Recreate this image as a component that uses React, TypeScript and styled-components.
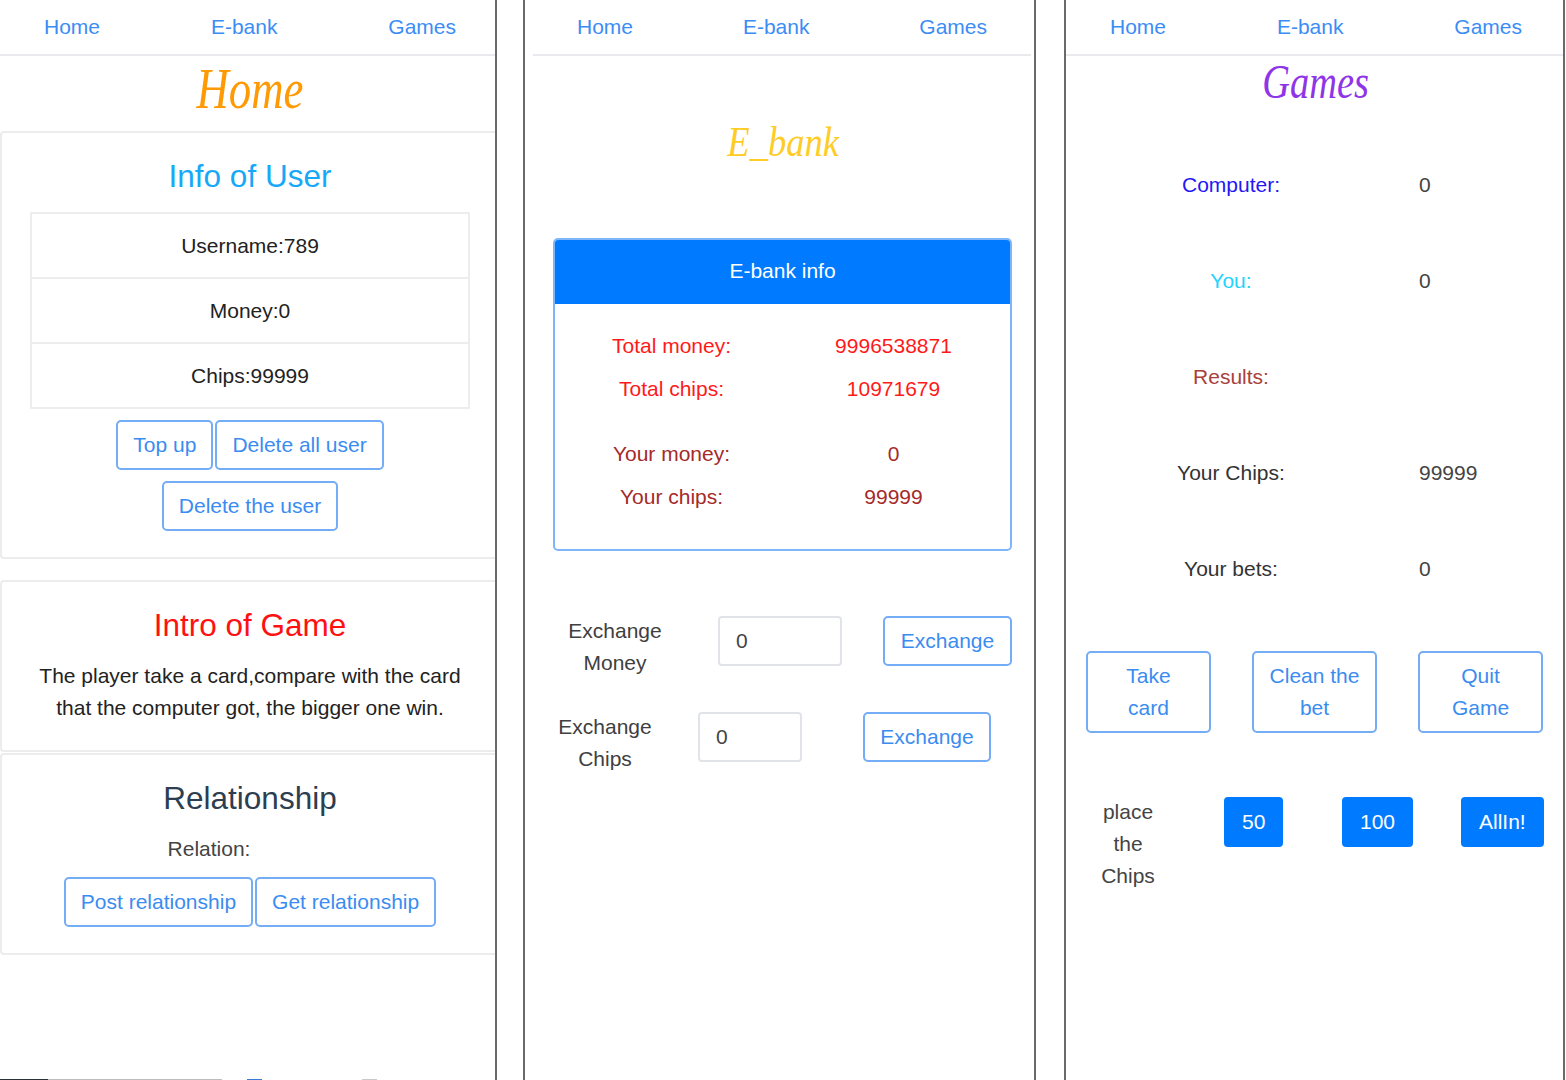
import styled, { createGlobalStyle } from 'styled-components';

const FRAME = '#6a6a6a';
const LINK = '#3b8df5';
const SANS = "'Liberation Sans', Arial, sans-serif";
const SERIF = "'Liberation Serif', 'Times New Roman', serif";

const GlobalStyle = createGlobalStyle`
  html, body {
    margin: 0;
    padding: 0;
    background: #fff;
  }
  body {
    font-family: ${SANS};
    font-size: 21px;
    color: #222;
  }
  *, *::before, *::after {
    box-sizing: border-box;
  }
`;

const Page = styled.main`
  display: flex;
  align-items: flex-start;
  width: 1566px;
  height: 1080px;
  overflow: hidden;
  background: #fff;
`;

const Phone = styled.section<{ $width: number; $gap?: number; $leftEdge?: boolean }>`
  flex: none;
  display: flex;
  flex-direction: column;
  width: ${(p) => p.$width}px;
  height: 1080px;
  margin-left: ${(p) => p.$gap ?? 0}px;
  border-left: ${(p) => (p.$leftEdge ? `2px solid ${FRAME}` : 'none')};
  border-right: 2px solid ${FRAME};
  overflow: hidden;
`;

const Screen = styled.div<{ $width: number }>`
  flex: none;
  display: flex;
  flex-direction: column;
  width: ${(p) => p.$width}px;
`;

const Nav = styled.nav<{ $inset?: string }>`
  display: flex;
  justify-content: space-between;
  align-items: center;
  height: 56px;
  margin: ${(p) => p.$inset ?? '0'};
  padding: 0 44px;
  border-bottom: 2px solid #e8eaed;
`;

const NavLink = styled.a`
  color: ${LINK};
  font-size: 21px;
  text-decoration: none;
`;

const PageTitle = styled.h1<{
  $color: string;
  $size: number;
  $squeeze: number;
  $line: number;
  $mt: number;
  $mb: number;
}>`
  margin: ${(p) => p.$mt}px 0 ${(p) => p.$mb}px;
  text-align: center;
  font: italic 400 ${(p) => p.$size}px ${SERIF};
  line-height: ${(p) => p.$line}px;
  color: ${(p) => p.$color};

  & > span {
    display: inline-block;
    transform: scaleX(${(p) => p.$squeeze});
  }
`;

/* ---------- Home ---------- */

const Card = styled.div<{ $mt?: number }>`
  display: flex;
  flex-direction: column;
  align-items: center;
  margin-top: ${(p) => p.$mt ?? 0}px;
  padding: 23px 28px 26px;
  border: 2px solid #ececec;
  border-radius: 4px;
  text-align: center;
`;

const CardTitle = styled.h2<{ $color: string }>`
  margin: 0;
  font-size: 31.5px;
  font-weight: 400;
  line-height: 40px;
  color: ${(p) => p.$color};
`;

const InfoTable = styled.div`
  width: 100%;
  margin-top: 16px;
  border: 2px solid #ededed;
`;

const InfoRow = styled.div`
  display: flex;
  align-items: center;
  justify-content: center;
  height: 63px;
  color: #222;

  & + & {
    height: 65px;
    border-top: 2px solid #ededed;
  }
`;

const Paragraph = styled.p`
  margin: 15px 0 0;
  line-height: 32px;
  color: #222;
`;

const RelationText = styled.div`
  margin-top: 15px;
  padding-right: 82px;
  line-height: 32px;
  color: #444;
`;

const ButtonRow = styled.div<{ $mt: number }>`
  display: flex;
  justify-content: center;
  gap: 2px;
  margin-top: ${(p) => p.$mt}px;
`;

const OutlineButton = styled.button<{ $width?: number; $height?: number; $ml?: number }>`
  flex: none;
  width: ${(p) => (p.$width ? `${p.$width}px` : 'auto')};
  height: ${(p) => p.$height ?? 50}px;
  margin-left: ${(p) => p.$ml ?? 0}px;
  padding: ${(p) => (p.$width ? '0' : '0 15px')};
  border: 2px solid #74acf5;
  border-radius: 5px;
  background: #fff;
  color: #3b8cf0;
  font-family: ${SANS};
  font-size: 21px;
  line-height: 32px;
  white-space: nowrap;
  cursor: pointer;
`;

const Taskbar = styled.div`
  display: flex;
  height: 1px;
  margin-top: auto;
`;

const TaskbarPiece = styled.span<{ $width: number; $color: string; $ml?: number }>`
  width: ${(p) => p.$width}px;
  margin-left: ${(p) => p.$ml ?? 0}px;
  background: ${(p) => p.$color};
`;

/* ---------- E-bank ---------- */

const BankCard = styled.div`
  margin: 0 29px 0 28px;
  border: 2px solid #7fb6fa;
  border-radius: 5px;
  overflow: hidden;
`;

const BankHeader = styled.div`
  display: flex;
  align-items: center;
  justify-content: center;
  height: 64px;
  padding-bottom: 3px;
  background: #007bff;
  color: #fff;
`;

const BankBody = styled.div`
  padding: 20px 0 31px;
`;

const BankGrid = styled.div<{ $color: string; $mt?: number }>`
  display: grid;
  grid-template-columns: 222px 222px;
  grid-auto-rows: 43px;
  justify-content: center;
  align-items: center;
  margin-top: ${(p) => p.$mt ?? 0}px;
  text-align: center;
  color: ${(p) => p.$color};
`;

const ExchangeRow = styled.div<{ $mt: number; $pl: number }>`
  display: flex;
  align-items: flex-start;
  margin-top: ${(p) => p.$mt}px;
  padding-left: ${(p) => p.$pl}px;
`;

const ExchangeLabel = styled.div`
  flex: none;
  width: 110px;
  line-height: 32px;
  text-align: center;
  color: #404040;
`;

const AmountInput = styled.input<{ $width: number; $ml: number }>`
  flex: none;
  width: ${(p) => p.$width}px;
  height: 50px;
  margin: 1px 0 0 ${(p) => p.$ml}px;
  padding: 0 16px;
  border: 2px solid #e0e3e8;
  border-radius: 4px;
  background: #fff;
  color: #444;
  font-family: ${SANS};
  font-size: 21px;
  outline: none;
`;

const ExchangeButton = styled(OutlineButton)`
  margin-top: 1px;
`;

/* ---------- Games ---------- */

const StatRow = styled.div`
  display: grid;
  grid-template-columns: 330px 1fr;
  align-items: center;
  height: 96px;
`;

const StatLabel = styled.span<{ $color: string }>`
  text-align: center;
  color: ${(p) => p.$color};
`;

const StatValue = styled.span`
  padding-left: 23px;
  color: #444;
`;

const ActionRow = styled.div`
  display: grid;
  grid-template-columns: repeat(3, 125px);
  column-gap: 41px;
  margin-top: 34px;
  padding-left: 20px;
`;

const ChipRow = styled.div`
  display: grid;
  grid-template-columns: 138px 118px 119px auto;
  align-items: start;
  justify-items: start;
  margin-top: 64px;
  padding-left: 20px;
`;

const ChipLabel = styled.div`
  width: 84px;
  margin-top: -1px;
  line-height: 32px;
  text-align: center;
  color: #444;
`;

const SolidButton = styled.button`
  height: 50px;
  padding: 0 18px;
  border: none;
  border-radius: 4px;
  background: #007bff;
  color: #fff;
  font-family: ${SANS};
  font-size: 21px;
  cursor: pointer;
`;

const navItems = ['Home', 'E-bank', 'Games'];

function TopNav({ inset }: { inset?: string }) {
  return (
    <Nav $inset={inset}>
      {navItems.map((item) => (
        <NavLink key={item} href="#">
          {item}
        </NavLink>
      ))}
    </Nav>
  );
}

const stats = [
  { label: 'Computer:', color: '#2417f5', value: '0' },
  { label: 'You:', color: '#22d2ff', value: '0' },
  { label: 'Results:', color: '#a8413a', value: '' },
  { label: 'Your Chips:', color: '#333', value: '99999' },
  { label: 'Your bets:', color: '#333', value: '0' },
];

export default function App() {
  return (
    <>
      <GlobalStyle />
      <Page>
        <Phone $width={497}>
          <Screen $width={500}>
            <TopNav />
            <PageTitle $color="#ff9a05" $size={56} $squeeze={0.8} $line={60} $mt={3} $mb={12}>
              <span>Home</span>
            </PageTitle>

            <Card>
              <CardTitle $color="#17a9f7">Info of User</CardTitle>
              <InfoTable>
                <InfoRow>Username:789</InfoRow>
                <InfoRow>Money:0</InfoRow>
                <InfoRow>Chips:99999</InfoRow>
              </InfoTable>
              <ButtonRow $mt={11}>
                <OutlineButton>Top up</OutlineButton>
                <OutlineButton>Delete all user</OutlineButton>
              </ButtonRow>
              <ButtonRow $mt={11}>
                <OutlineButton>Delete the user</OutlineButton>
              </ButtonRow>
            </Card>

            <Card $mt={21}>
              <CardTitle $color="#ff1111">Intro of Game</CardTitle>
              <Paragraph>
                The player take a card,compare with the card
                <br />
                that the computer got, the bigger one win.
              </Paragraph>
            </Card>

            <Card $mt={1}>
              <CardTitle $color="#2c3e50">Relationship</CardTitle>
              <RelationText>Relation:</RelationText>
              <ButtonRow $mt={12}>
                <OutlineButton>Post relationship</OutlineButton>
                <OutlineButton>Get relationship</OutlineButton>
              </ButtonRow>
            </Card>
          </Screen>
          <Taskbar>
            <TaskbarPiece $width={48} $color="#263238" />
            <TaskbarPiece $width={174} $color="#bdbdbd" />
            <TaskbarPiece $width={15} $ml={25} $color="#3a7bd5" />
            <TaskbarPiece $width={15} $ml={100} $color="#c8c8c8" />
          </Taskbar>
        </Phone>

        <Phone $width={513} $gap={26} $leftEdge>
          <Screen $width={516}>
            <TopNav inset="0 10px 0 8px" />
            <PageTitle $color="#ffcc26" $size={42} $squeeze={0.87} $line={60} $mt={56} $mb={66}>
              <span>E_bank</span>
            </PageTitle>

            <BankCard>
              <BankHeader>E-bank info</BankHeader>
              <BankBody>
                <BankGrid $color="#ff1a1a">
                  <span>Total money:</span>
                  <span>9996538871</span>
                  <span>Total chips:</span>
                  <span>10971679</span>
                </BankGrid>
                <BankGrid $color="#a52a2a" $mt={22}>
                  <span>Your money:</span>
                  <span>0</span>
                  <span>Your chips:</span>
                  <span>99999</span>
                </BankGrid>
              </BankBody>
            </BankCard>

            <ExchangeRow $mt={64} $pl={35}>
              <ExchangeLabel>
                Exchange
                <br />
                Money
              </ExchangeLabel>
              <AmountInput $width={124} $ml={48} value="0" readOnly />
              <ExchangeButton $width={129} $ml={41}>
                Exchange
              </ExchangeButton>
            </ExchangeRow>

            <ExchangeRow $mt={32} $pl={25}>
              <ExchangeLabel>
                Exchange
                <br />
                Chips
              </ExchangeLabel>
              <AmountInput $width={104} $ml={38} value="0" readOnly />
              <ExchangeButton $width={128} $ml={61}>
                Exchange
              </ExchangeButton>
            </ExchangeRow>
          </Screen>
        </Phone>

        <Phone $width={501} $gap={28} $leftEdge>
          <Screen $width={500}>
            <TopNav />
            <PageTitle $color="#8e35e8" $size={48} $squeeze={0.8} $line={52} $mt={0} $mb={29}>
              <span>Games</span>
            </PageTitle>

            {stats.map((s) => (
              <StatRow key={s.label}>
                <StatLabel $color={s.color}>{s.label}</StatLabel>
                <StatValue>{s.value}</StatValue>
              </StatRow>
            ))}

            <ActionRow>
              <OutlineButton $width={125} $height={82}>
                Take
                <br />
                card
              </OutlineButton>
              <OutlineButton $width={125} $height={82}>
                Clean the
                <br />
                bet
              </OutlineButton>
              <OutlineButton $width={125} $height={82}>
                Quit
                <br />
                Game
              </OutlineButton>
            </ActionRow>

            <ChipRow>
              <ChipLabel>
                place
                <br />
                the
                <br />
                Chips
              </ChipLabel>
              <SolidButton>50</SolidButton>
              <SolidButton>100</SolidButton>
              <SolidButton>AllIn!</SolidButton>
            </ChipRow>
          </Screen>
        </Phone>
      </Page>
    </>
  );
}
